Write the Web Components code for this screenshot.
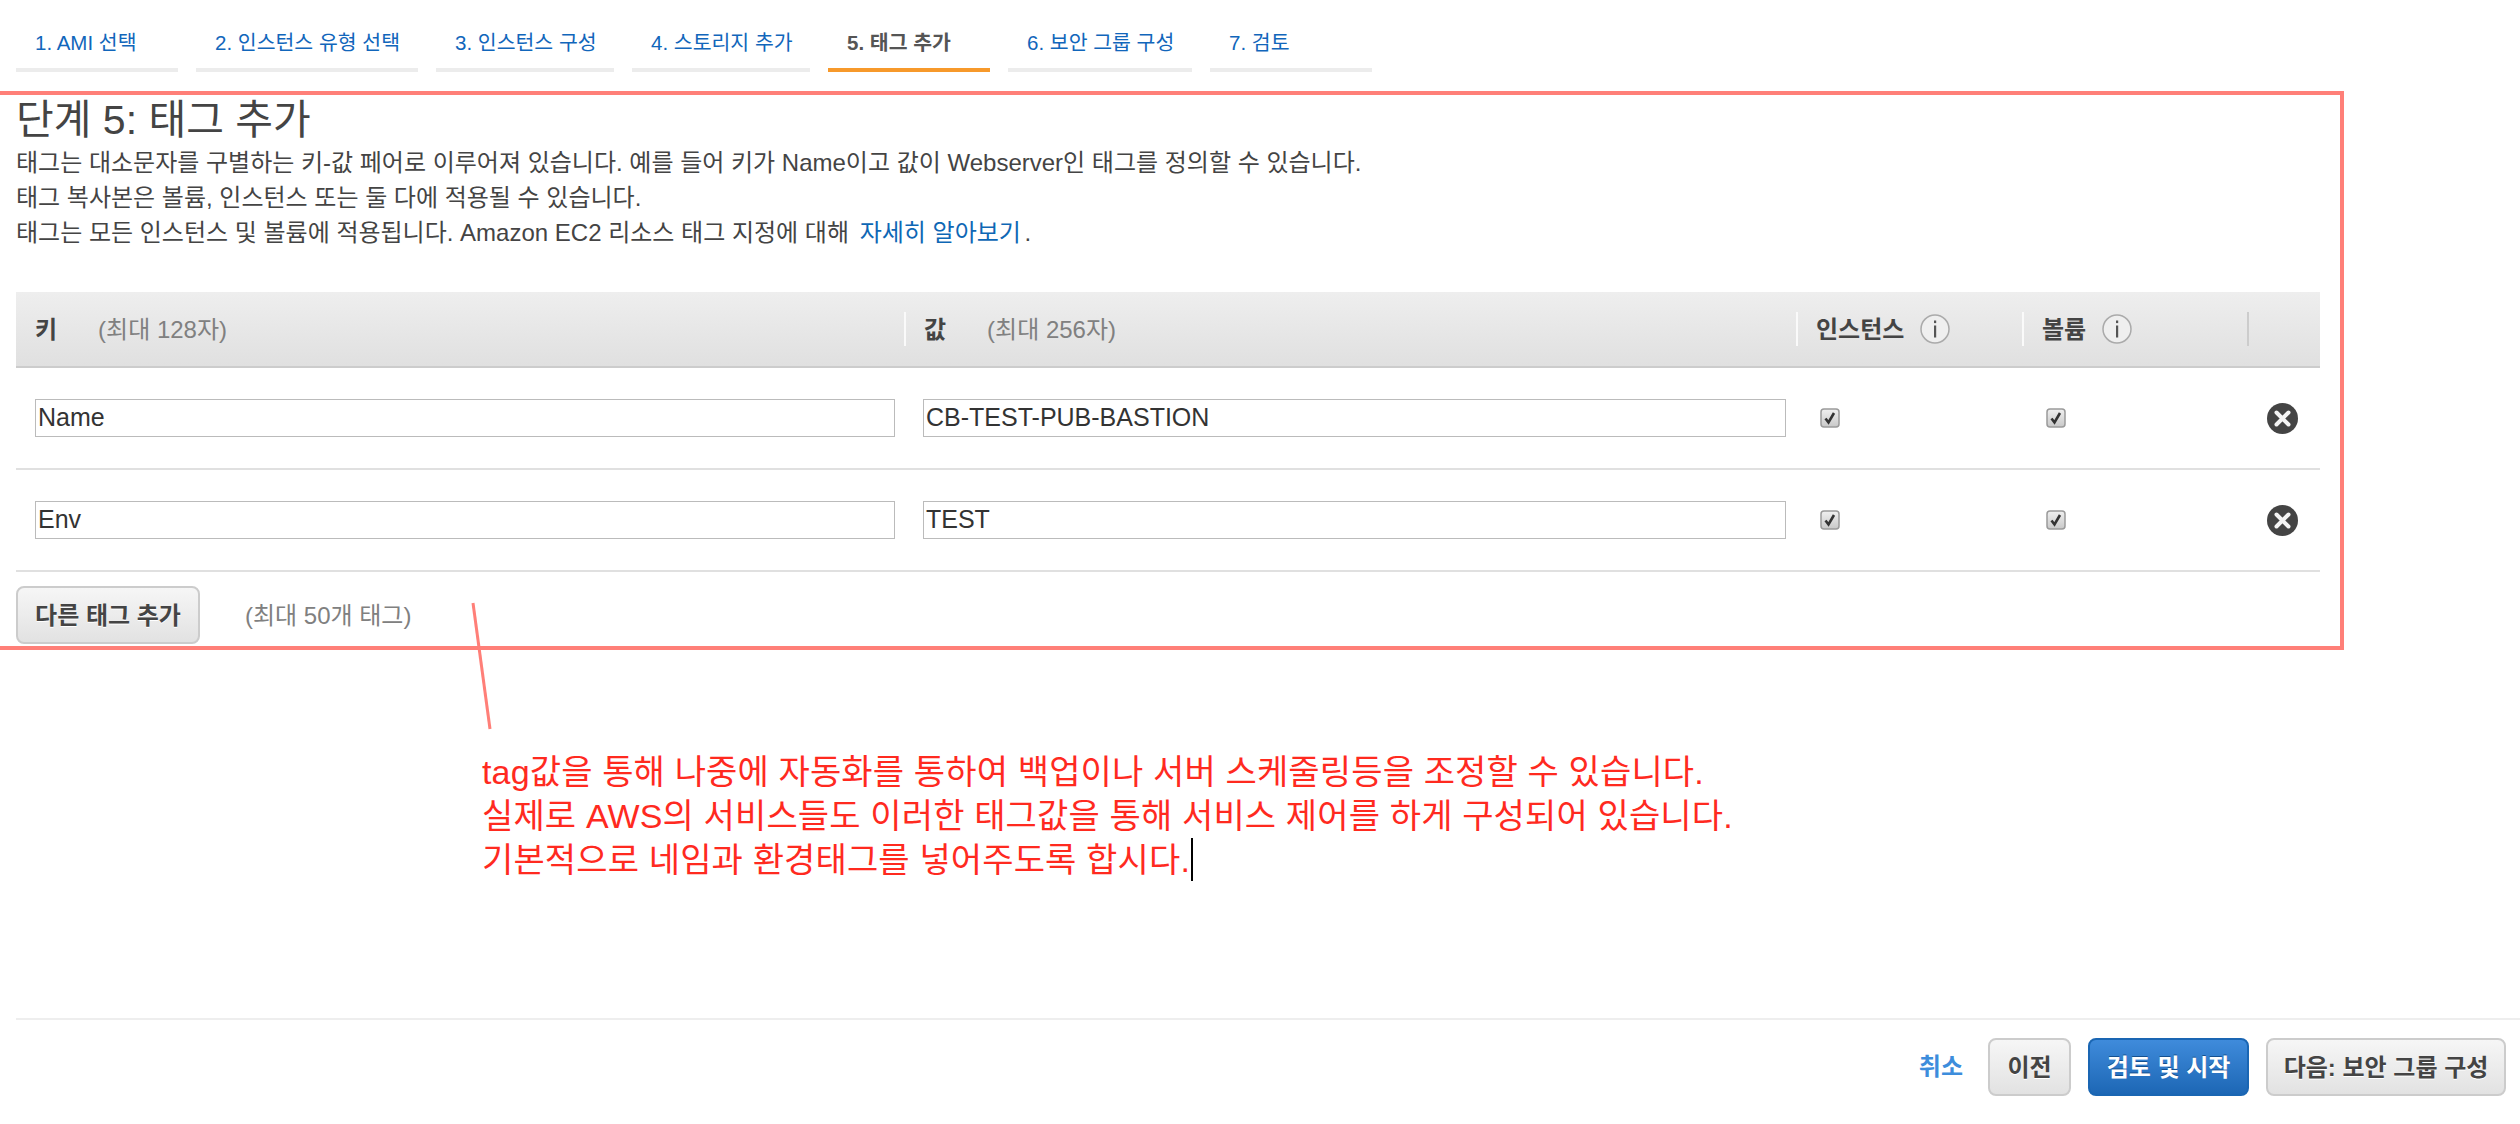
<!DOCTYPE html>
<html lang="ko">
<head>
<meta charset="utf-8">
<title>단계 5: 태그 추가</title>
<style>
  body { margin: 0; background: #fff; font-family: "Liberation Sans", "Noto Sans CJK KR", sans-serif; color: #444; }
</style>
</head>
<body>
<tag-wizard-page>
  <wizard-steps slot="steps">
    <wizard-step style="width:162px">1. AMI 선택</wizard-step>
    <wizard-step style="width:222px">2. 인스턴스 유형 선택</wizard-step>
    <wizard-step style="width:178px">3. 인스턴스 구성</wizard-step>
    <wizard-step style="width:178px">4. 스토리지 추가</wizard-step>
    <wizard-step style="width:162px" active>5. 태그 추가</wizard-step>
    <wizard-step style="width:184px">6. 보안 그룹 구성</wizard-step>
    <wizard-step style="width:162px">7. 검토</wizard-step>
  </wizard-steps>

  <marked-box slot="main">
    <step-intro>
      <span slot="title">단계 5: 태그 추가</span>
      <p>태그는 대소문자를 구별하는 키-값 페어로 이루어져 있습니다. 예를 들어 키가 Name이고 값이 Webserver인 태그를 정의할 수 있습니다.</p>
      <p>태그 복사본은 볼륨, 인스턴스 또는 둘 다에 적용될 수 있습니다.</p>
      <p>태그는 모든 인스턴스 및 볼륨에 적용됩니다. Amazon EC2 리소스 태그 지정에 대해 <a>자세히 알아보기</a> .</p>
    </step-intro>
    <tag-table>
      <tag-row key="Name" value="CB-TEST-PUB-BASTION"></tag-row>
      <tag-row key="Env" value="TEST"></tag-row>
    </tag-table>
  </marked-box>

  <note-text slot="note">
    <div>tag값을 통해 나중에 자동화를 통하여 백업이나 서버 스케줄링등을 조정할 수 있습니다.</div>
    <div>실제로 AWS의 서비스들도 이러한 태그값을 통해 서비스 제어를 하게 구성되어 있습니다.</div>
    <div>기본적으로 네임과 환경태그를 넣어주도록 합시다.<i></i></div>
  </note-text>

  <wizard-footer slot="footer">
    <a-link>취소</a-link>
    <aws-button style="width:83px">이전</aws-button>
    <aws-button style="width:161px" primary>검토 및 시작</aws-button>
    <aws-button style="width:240px">다음: 보안 그룹 구성</aws-button>
  </wizard-footer>
</tag-wizard-page>

<script>
  const FONT = '"Liberation Sans", "Noto Sans CJK KR", sans-serif';

  function shadow(el, html) {
    el.attachShadow({ mode: 'open' }).innerHTML = html;
  }

  class TagWizardPage extends HTMLElement {
    constructor() {
      super();
      shadow(this, `
        <style>
          :host { display: flex; flex-direction: column; height: 1124px; position: relative; overflow: hidden; }
          svg { position: absolute; left: 0; top: 0; pointer-events: none; }
          .foot { margin-top: auto; }
        </style>
        <slot name="steps"></slot>
        <slot name="main"></slot>
        <slot name="note"></slot>
        <div class="foot"><slot name="footer"></slot></div>
        <svg width="520" height="740"><line x1="473" y1="603" x2="490" y2="729" stroke="#ff7f78" stroke-width="3"/></svg>
      `);
    }
  }

  class WizardSteps extends HTMLElement {
    constructor() {
      super();
      shadow(this, `
        <style>
          :host { display: flex; gap: 18px; height: 91px; padding-left: 16px; box-sizing: border-box; }
        </style>
        <slot></slot>
      `);
    }
  }

  class WizardStep extends HTMLElement {
    constructor() {
      super();
      shadow(this, `
        <style>
          :host { display: block; box-sizing: border-box; height: 72px; padding: 28px 0 0 19px;
                  border-bottom: 4px solid #ececec; color: #1166bb; font: 20.5px/30px ${FONT}; white-space: nowrap; }
          :host([active]) { border-bottom-color: #f7992b; color: #555; font-weight: 700; }
        </style>
        <slot></slot>
      `);
    }
  }

  class MarkedBox extends HTMLElement {
    constructor() {
      super();
      shadow(this, `
        <style>
          :host { display: block; box-sizing: border-box; width: 2344px; height: 559px; padding-left: 16px;
                  border: 4px solid #ff7f78; border-left: 0; }
        </style>
        <slot></slot>
      `);
    }
  }

  class StepIntro extends HTMLElement {
    constructor() {
      super();
      shadow(this, `
        <style>
          :host { display: block; height: 197px; }
          h1 { margin: 0; padding-top: 1px; font: 400 41px/49px ${FONT}; color: #444; }
          .copy { font: 24px/35px ${FONT}; color: #444; }
          ::slotted(p) { margin: 0; }
        </style>
        <h1><slot name="title"></slot></h1>
        <div class="copy"><slot></slot></div>
      `);
    }
  }

  class TagTable extends HTMLElement {
    constructor() {
      super();
      shadow(this, `
        <style>
          :host { display: block; width: 2304px; }
          .head { display: grid; grid-template-columns: 888px 892px 226px 225px 73px; align-items: center;
                  height: 76px; box-sizing: border-box; border-bottom: 2px solid #ccc;
                  background: linear-gradient(#eeeeee, #e0e0e0); font: 24px ${FONT}; }
          .cell { display: flex; align-items: center; height: 34px; box-sizing: border-box; border-left: 2px solid #fafafa; padding-left: 18px; }
          .cell:first-child { border-left: 0; padding-left: 19px; }
          .cell:last-child { border-left-color: #ccc; }
          b { color: #444; padding-bottom: 4px; }
          .cap { color: #808080; margin-left: 41px; padding-bottom: 3px; }
          info-icon { margin-left: 16px; }
          .add { display: flex; align-items: center; padding-top: 14px; }
          .add span { color: #808080; margin-left: 45px; padding-bottom: 4px; font: 24px ${FONT}; }
        </style>
        <div class="head">
          <div class="cell"><b>키</b><span class="cap">(최대 128자)</span></div>
          <div class="cell"><b>값</b><span class="cap">(최대 256자)</span></div>
          <div class="cell"><b>인스턴스</b><info-icon></info-icon></div>
          <div class="cell"><b>볼륨</b><info-icon></info-icon></div>
          <div class="cell"></div>
        </div>
        <slot></slot>
        <div class="add"><aws-button style="width:184px;height:58px">다른 태그 추가</aws-button><span>(최대 50개 태그)</span></div>
      `);
    }
  }

  class TagRow extends HTMLElement {
    constructor() {
      super();
      shadow(this, `
        <style>
          :host { display: grid; grid-template-columns: 888px 892px 226px 225px 73px; align-items: center;
                  height: 102px; box-sizing: border-box; border-bottom: 2px solid #e0e0e0; }
          .field { box-sizing: border-box; height: 38px; border: 1px solid #bbb; padding: 0 2px;
                   font: 25px/35px ${FONT}; color: #333; background: #fff; }
          .k { margin-left: 19px; width: 860px; }
          .v { margin-left: 19px; width: 863px; }
          .chk { margin-left: 24px; display: block; }
          .x { margin-left: 20px; display: block; }
        </style>
        <div><div class="field k">${this.getAttribute('key')}</div></div>
        <div><div class="field v">${this.getAttribute('value')}</div></div>
        <div><check-mark class="chk"></check-mark></div>
        <div><check-mark class="chk"></check-mark></div>
        <div><svg class="x" width="31" height="31" viewBox="0 0 31 31">
          <circle cx="15.5" cy="15.5" r="15.5" fill="#444"/>
          <path d="M9.5 9.5L21.5 21.5M21.5 9.5L9.5 21.5" stroke="#f4f4f4" stroke-width="4" stroke-linecap="round"/>
        </svg></div>
      `);
    }
  }

  class CheckMark extends HTMLElement {
    constructor() {
      super();
      shadow(this, `
        <style>
          :host { display: block; width: 20px; height: 20px; }
          svg { display: block; }
        </style>
        <svg width="20" height="20" viewBox="0 0 20 20">
          <defs><linearGradient id="g" x1="0" y1="0" x2="0" y2="1"><stop offset="0" stop-color="#f0f0f0"/><stop offset="1" stop-color="#c8c8c8"/></linearGradient></defs>
          <rect x="1" y="1" width="18" height="18" rx="3" fill="url(#g)" stroke="#9a9a9a" stroke-width="1.5"/>
          <path d="M5.5 10.5L8.5 14.5L14 5" fill="none" stroke="#333" stroke-width="2.6"/>
        </svg>
      `);
    }
  }

  class InfoIcon extends HTMLElement {
    constructor() {
      super();
      shadow(this, `
        <style>:host { display: block; width: 30px; height: 30px; } svg { display: block; }</style>
        <svg width="30" height="30" viewBox="0 0 30 30">
          <circle cx="15" cy="15" r="14" fill="#efefef" stroke="#aaa" stroke-width="1.5"/>
          <rect x="14" y="11.5" width="2.2" height="12" fill="#555"/>
          <rect x="14" y="6.5" width="2.2" height="2.6" fill="#555"/>
        </svg>
      `);
    }
  }

  class AwsButton extends HTMLElement {
    constructor() {
      super();
      shadow(this, `
        <style>
          :host { display: flex; align-items: center; justify-content: center; box-sizing: border-box; height: 58px; padding-bottom: 4px;
                  border: 2px solid #ccc; border-radius: 8px; background: linear-gradient(#f6f6f6, #e2e2e2);
                  color: #444; font: 700 24px ${FONT}; text-shadow: 0 1px 0 #fff; white-space: nowrap; }
          :host([primary]) { border-color: #1a66b3; background: linear-gradient(#3f8bdb, #1d67b5);
                  color: #fff; text-shadow: 0 -1px 0 #15508f; }
        </style>
        <slot></slot>
      `);
    }
  }

  class ALink extends HTMLElement {
    constructor() {
      super();
      shadow(this, `
        <style>:host { display: block; color: #3d8ddc; font: 700 24px ${FONT}; margin-right: 8px; padding-bottom: 5px; }</style>
        <slot></slot>
      `);
    }
  }

  class NoteText extends HTMLElement {
    constructor() {
      super();
      shadow(this, `
        <style>
          :host { display: block; margin: 101px 0 0 482px; color: #ff2a1f; font: 34px/43.5px ${FONT}; letter-spacing: 0.15px; white-space: nowrap; }
          ::slotted(div) { height: 43.5px; }
        </style>
        <slot></slot>
      `);
    }
  }

  class WizardFooter extends HTMLElement {
    constructor() {
      super();
      shadow(this, `
        <style>
          :host { display: flex; justify-content: flex-end; align-items: center; gap: 17px; height: 106px; box-sizing: border-box;
                  margin-left: 16px; padding: 18px 14px 28px 0; border-top: 2px solid #eeeeee; }
        </style>
        <slot></slot>
      `);
    }
  }

  customElements.define('tag-wizard-page', TagWizardPage);
  customElements.define('wizard-steps', WizardSteps);
  customElements.define('wizard-step', WizardStep);
  customElements.define('marked-box', MarkedBox);
  customElements.define('step-intro', StepIntro);
  customElements.define('tag-table', TagTable);
  customElements.define('tag-row', TagRow);
  customElements.define('check-mark', CheckMark);
  customElements.define('info-icon', InfoIcon);
  customElements.define('aws-button', AwsButton);
  customElements.define('a-link', ALink);
  customElements.define('note-text', NoteText);
  customElements.define('wizard-footer', WizardFooter);
</script>
<style>
  step-intro a { color: #0e67b5; margin: 0 -3px 0 4px; }
  note-text i { display: inline-block; width: 2px; height: 43px; background: #000; vertical-align: -9px; margin-left: 1px; }
</style>
</body>
</html>
